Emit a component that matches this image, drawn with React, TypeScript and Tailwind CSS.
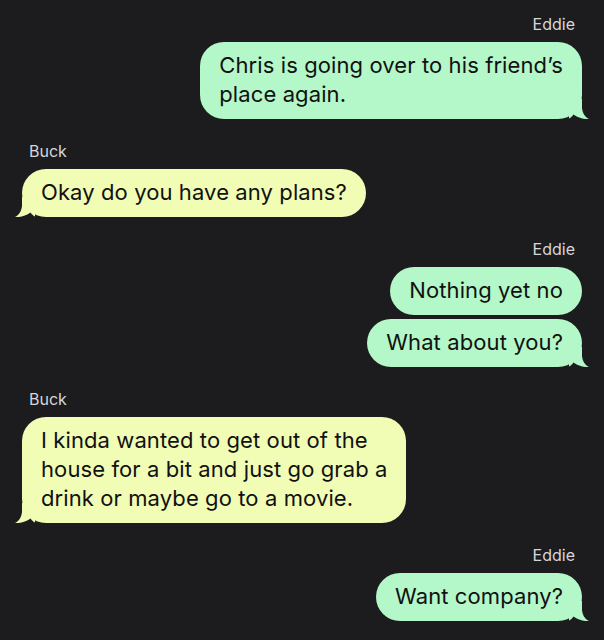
import type { ReactNode } from "react";

type Side = "me" | "them";

interface Group {
  from: string;
  side: Side;
  messages: ReactNode[];
}

const groups: Group[] = [
  {
    from: "Eddie",
    side: "me",
    messages: [
      <>
        Chris is going over to his friend’s
        <br />
        place again.
      </>,
    ],
  },
  { from: "Buck", side: "them", messages: ["Okay do you have any plans?"] },
  { from: "Eddie", side: "me", messages: ["Nothing yet no", "What about you?"] },
  {
    from: "Buck",
    side: "them",
    messages: [
      <>
        I kinda wanted to get out of the
        <br />
        house for a bit and just go grab a
        <br />
        drink or maybe go to a movie.
      </>,
    ],
  },
  { from: "Eddie", side: "me", messages: ["Want company?"] },
];

function Tail({ side, color }: { side: Side; color: string }) {
  return (
    <svg
      viewBox="0 0 20 20"
      className={
        side === "me"
          ? "absolute -right-[7px] bottom-0 h-5 w-5"
          : "absolute -left-[7px] bottom-0 h-5 w-5 -scale-x-100"
      }
    >
      <path
        d="M0,0 H13 V9 C13.5,14 16,18 20,20 C15.5,20.5 9,19 4.5,15.5 C3,17.5 1.5,19 0,19.5 Z"
        fill={color}
      />
    </svg>
  );
}

function Bubble({ side, tail, children }: { side: Side; tail: boolean; children: ReactNode }) {
  const color = side === "me" ? "#b4f7c8" : "#f1fcb5";
  return (
    <div
      className={
        "relative rounded-[24px] px-[19px] pt-[9px] pb-[10px] text-[22px] leading-[29px] tracking-[0.1px] text-[#111] " +
        (side === "me" ? "bg-[#b4f7c8]" : "bg-[#f1fcb5]")
      }
    >
      {children}
      {tail && <Tail side={side} color={color} />}
    </div>
  );
}

export default function App() {
  return (
    <div className="min-h-[640px] w-[604px] bg-[#1c1c1e] px-[22px] pt-[15px] font-['Inter',sans-serif]">
      <div className="flex flex-col gap-[23px]">
        {groups.map((g, i) => (
          <section
            key={i}
            className={"flex flex-col " + (g.side === "me" ? "items-end" : "items-start")}
          >
            <p className="mx-[7px] mb-[9px] text-[16px] leading-[18px] text-[#d6d6da]">{g.from}</p>
            <div className={"flex flex-col gap-1 " + (g.side === "me" ? "items-end" : "items-start")}>
              {g.messages.map((m, j) => (
                <Bubble key={j} side={g.side} tail={j === g.messages.length - 1}>
                  {m}
                </Bubble>
              ))}
            </div>
          </section>
        ))}
      </div>
    </div>
  );
}
